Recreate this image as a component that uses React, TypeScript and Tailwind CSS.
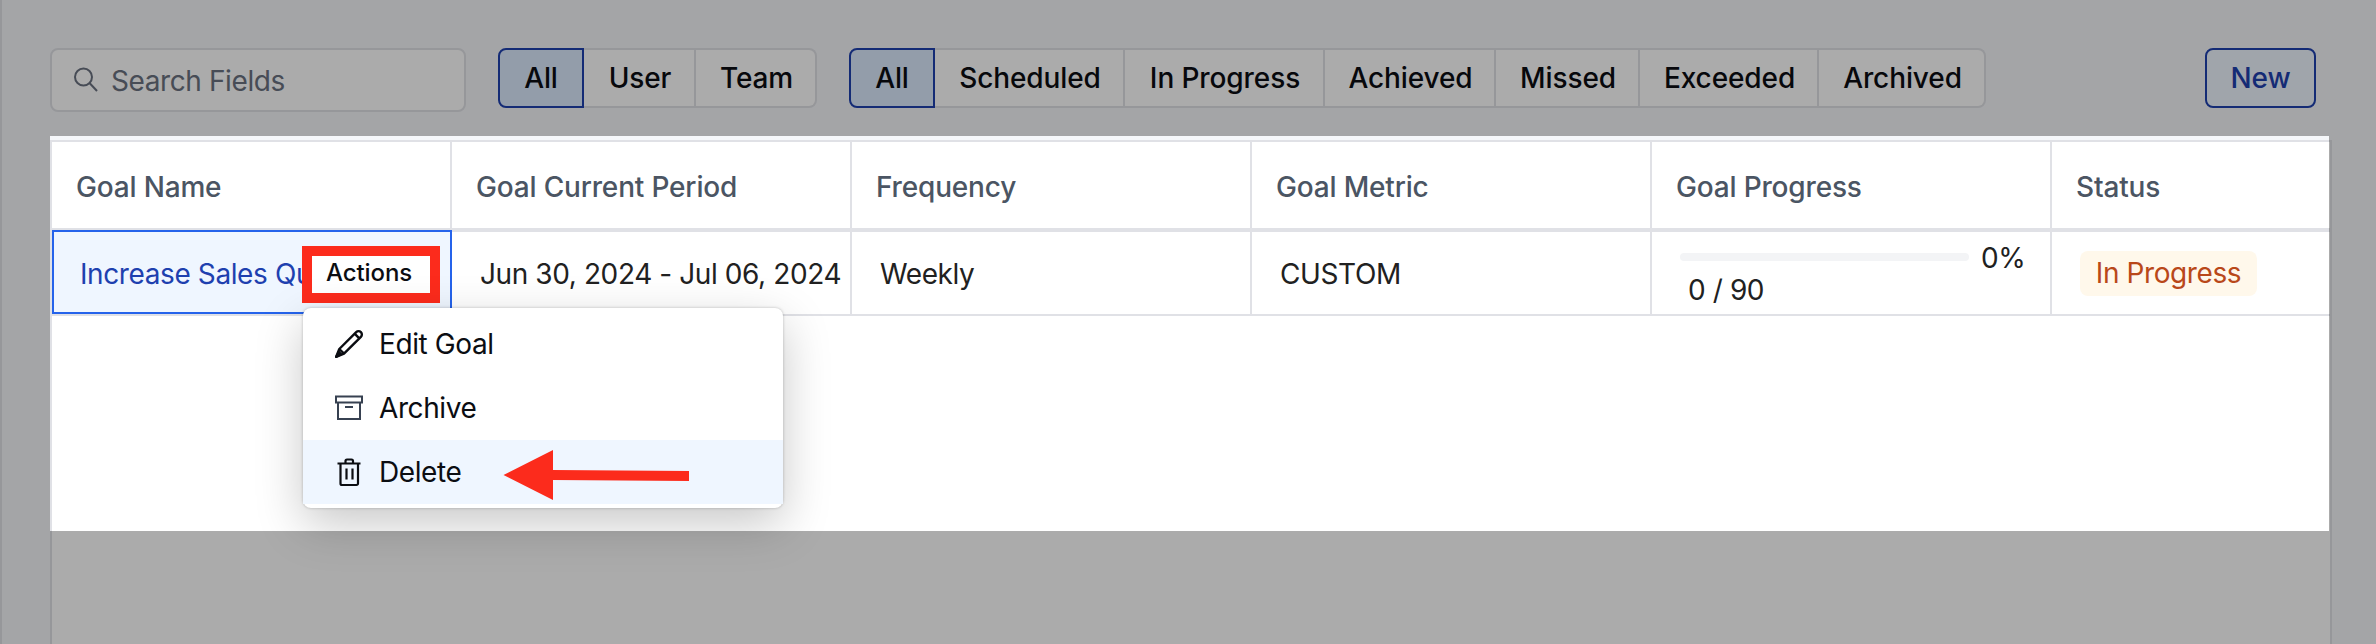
import { ReactNode } from 'react'

const ownerTabs = [
    { label: 'All', width: 'w-[86px]' },
    { label: 'User', width: 'w-[112px]' },
    { label: 'Team', width: 'w-[121px]' },
]

const statusTabs = [
    { label: 'All', width: 'w-[86px]' },
    { label: 'Scheduled', width: 'w-[190px]' },
    { label: 'In Progress', width: 'w-[200px]' },
    { label: 'Achieved', width: 'w-[171px]' },
    { label: 'Missed', width: 'w-[144px]' },
    { label: 'Exceeded', width: 'w-[179px]' },
    { label: 'Archived', width: 'w-[167px]' },
]

const columns = [
    'Goal Name',
    'Goal Current Period',
    'Frequency',
    'Goal Metric',
    'Goal Progress',
]

type Tab = { label: string; width: string }

const ButtonGroup = ({ tabs }: { tabs: Tab[] }) => (
    <div className="flex h-[60px] font-medium tracking-[-0.1px] text-[#0b0d12]">
        {tabs.map((tab, i) => (
            <div
                key={tab.label}
                className={`${tab.width} flex items-center justify-center ${
                    i === 0
                        ? 'border-2 border-[#1e40af] bg-[#dbeafe] rounded-l-lg'
                        : 'border-y-2 border-r-2 border-[#e0e1e6] bg-white pl-0.5 last:rounded-r-lg'
                }`}
            >
                {tab.label}
            </div>
        ))}
    </div>
)

const Cell = ({ children }: { children?: ReactNode }) => (
    <div className="w-[400px] shrink-0 border-r-2 border-[#e0e1e6] flex items-center pl-[28px] pt-0.5 whitespace-nowrap">
        {children}
    </div>
)

const SearchIcon = () => (
    <svg width="24" height="26" viewBox="0 0 24 26" fill="none" stroke="#6b7280" strokeWidth="2">
        <circle cx="9.5" cy="10" r="8.5" />
        <path d="M15.5 16 L23 24" />
    </svg>
)

const PencilIcon = () => (
    <svg width="32" height="32" viewBox="0 0 32 32" fill="none" stroke="#0b0d12" strokeWidth="2.4" strokeLinejoin="round">
        <path d="M3.2 28.8 L6.3 21 L23.2 4.1 a3.3 3.3 0 0 1 4.7 4.7 L11 25.7 Z" />
        <path d="M6.3 21 L11 25.7 M21.6 5.7 L26.3 10.4" />
        <path d="M3.2 28.8 L6 24 L8 26 Z" fill="#0b0d12" />
    </svg>
)

const ArchiveIcon = () => (
    <svg width="32" height="32" viewBox="0 0 32 32" fill="none" stroke="#374151" strokeWidth="2">
        <path d="M3 4.5 h26 v6 h-26 z M5 10.5 v16.5 h22 v-16.5 M12 15 h8" />
    </svg>
)

const TrashIcon = () => (
    <svg width="32" height="32" viewBox="0 0 32 32" fill="none" stroke="#0b0d12" strokeWidth="2.2" strokeLinejoin="round">
        <path d="M4.5 7.5 h23 M7.5 7.5 v20 a1.5 1.5 0 0 0 1.5 1.5 h14.5 a1.5 1.5 0 0 0 1.5 -1.5 v-20 M12.5 7 v-2 a1.5 1.5 0 0 1 1.5 -1.5 h4.5 a1.5 1.5 0 0 1 1.5 1.5 v2 M13.5 12.5 v11 M19.5 12.5 v11" />
    </svg>
)

const ActionsMenu = () => (
    <div className="absolute left-[303px] top-[308px] w-[480px] h-[200px] py-1 bg-white rounded-lg text-[#0b0d12] shadow-[0_0_3px_rgba(0,0,0,0.25),0_16px_48px_rgba(0,0,0,0.22)]">
        <div className="h-16 flex items-center gap-[14px] pl-[30px]">
            <PencilIcon />
            Edit Goal
        </div>
        <div className="h-16 flex items-center gap-[14px] pl-[30px]">
            <ArchiveIcon />
            Archive
        </div>
        <div className="h-16 flex items-center gap-[14px] pl-[30px] bg-[#eff6ff]">
            <TrashIcon />
            Delete
        </div>
    </div>
)

const App = () => {
    return (
        <div className="relative w-[2376px] h-[644px] overflow-hidden bg-[#f5f7fa] font-['Inter',sans-serif] text-[28px] leading-[34px] tracking-[-0.4px] text-[#212121]">
            <div className="border-l-2 border-[#e0e1e6]">
                {/* Toolbar */}
                <div className="flex items-start pl-12 pt-12 h-[140px]">
                    <div className="w-[416px] h-16 border-2 border-[#e0e1e6] bg-white rounded-lg flex items-center gap-[13px] pl-[22px] text-[#6b7280]">
                        <SearchIcon />
                        <span className="pt-0.5">Search Fields</span>
                    </div>
                    <div className="ml-8">
                        <ButtonGroup tabs={ownerTabs} />
                    </div>
                    <div className="ml-8">
                        <ButtonGroup tabs={statusTabs} />
                    </div>
                    <div className="ml-[219px] w-[111px] h-[60px] border-2 border-[#1e40af] bg-[#eff6ff] rounded-lg flex items-center justify-center font-medium tracking-[-0.1px] text-[#1e40af]">
                        New
                    </div>
                </div>

                {/* Goals table */}
                <div className="ml-12 w-[2282px] h-[520px] border-2 border-[#e0e1e6] bg-white overflow-hidden">
                    <div className="h-[90px] flex border-b-4 border-[#e0e1e6] font-medium tracking-[-0.17px] text-[#4b5563]">
                        {columns.map((name) => (
                            <div
                                key={name}
                                className="w-[400px] shrink-0 border-r-2 border-[#e0e1e6] flex items-center pl-6 pt-[3px]"
                            >
                                {name}
                            </div>
                        ))}
                        <div className="flex items-center pl-6 pt-[3px]">Status</div>
                    </div>
                    <div className="h-[84px] flex border-b-2 border-[#e0e1e6]">
                        <div className="w-[400px] h-[84px] -mt-0.5 shrink-0 border-2 border-[#2563eb] bg-[#eff6ff] flex items-center pl-[26px] pt-[3px] whitespace-nowrap overflow-hidden text-[#1e40af]">
                            Increase Sales Qu
                        </div>
                        <Cell>Jun 30, 2024 - Jul 06, 2024</Cell>
                        <Cell>Weekly</Cell>
                        <Cell>CUSTOM</Cell>
                        <Cell>
                            <div className="-mt-0.5">
                                <div className="flex items-center h-8">
                                    <div className="w-[289px] h-2 rounded bg-[#f3f4f6]" />
                                    <span className="ml-3 pt-0.5">0%</span>
                                </div>
                                <div className="pl-2 h-8">0 / 90</div>
                            </div>
                        </Cell>
                        <div className="flex items-center pl-[28px]">
                            <div className="w-[177px] h-[45px] rounded-lg bg-[#fff8eb] flex items-center justify-center text-[#b9481a]">
                                In Progress
                            </div>
                        </div>
                    </div>
                </div>
            </div>

            <div className="absolute left-[302px] top-[246px] w-[138px] h-[57px] border-[10px] border-[#fc2b1c] bg-white flex items-center pl-[14px] pb-[3px] text-[24px] font-medium tracking-[-0.1px] text-[#0b0d12]">
                Actions
            </div>
            <ActionsMenu />

            {/* Dimmed backdrop around the highlighted area */}
            <div className="absolute left-[50px] top-[136px] w-[2279px] h-[395px] shadow-[0_0_0_2400px_rgba(0,0,0,0.33)]" />

            <svg className="absolute left-[503px] top-[449px]" width="188" height="52" fill="#fc2b1c">
                <path d="M0.5 26 L50 1 V21 L186 22 V32 L50 31 V51 Z" />
            </svg>
        </div>
    )
}

export default App
